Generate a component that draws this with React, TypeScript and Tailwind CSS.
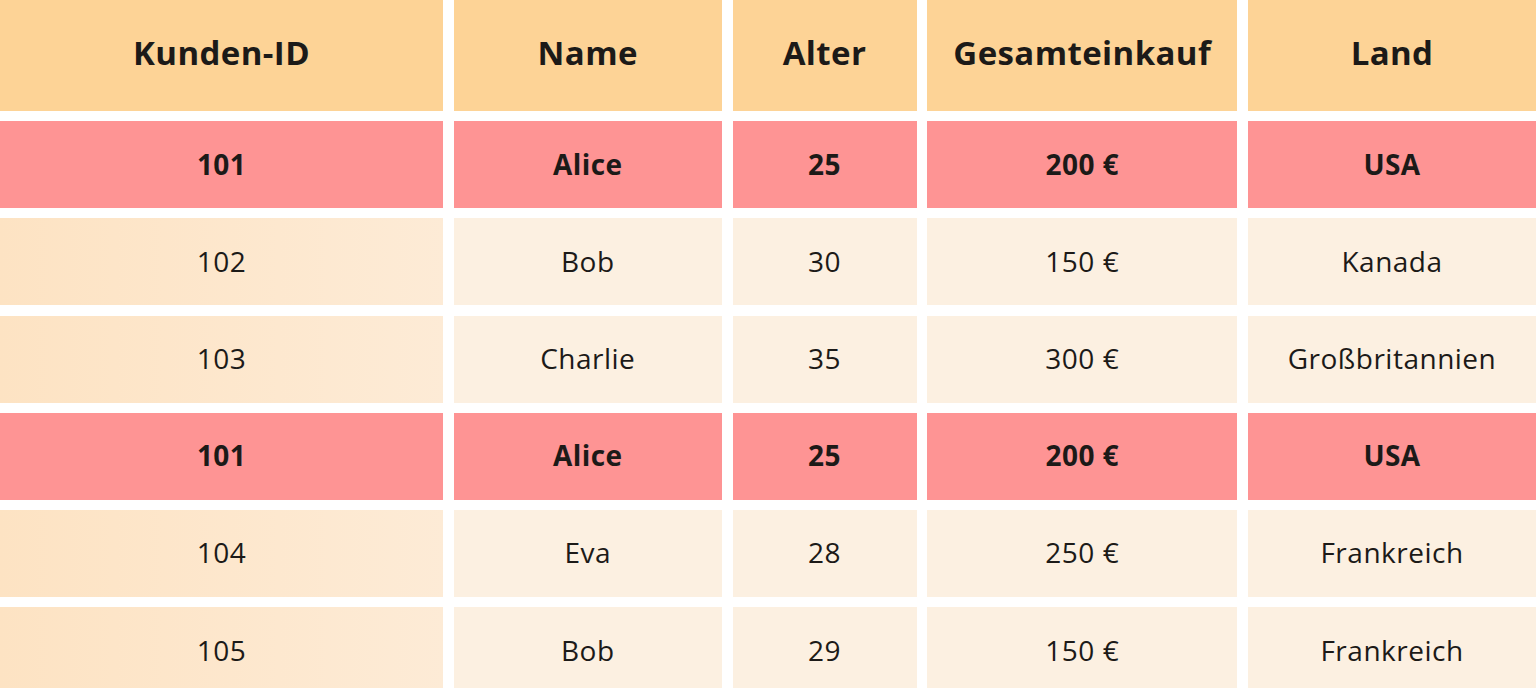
import React from 'react';

const headers = ['Kunden-ID', 'Name', 'Alter', 'Gesamteinkauf', 'Land'];

const rows = [
    { cells: ['101', 'Alice', '25', '200 €', 'USA'], marked: true },
    { cells: ['102', 'Bob', '30', '150 €', 'Kanada'], marked: false },
    { cells: ['103', 'Charlie', '35', '300 €', 'Großbritannien'], marked: false },
    { cells: ['101', 'Alice', '25', '200 €', 'USA'], marked: true },
    { cells: ['104', 'Eva', '28', '250 €', 'Frankreich'], marked: false },
    { cells: ['105', 'Bob', '29', '150 €', 'Frankreich'], marked: false },
];

const App = () => {
    return (
        <div
            className="w-[1536px] h-[688px] overflow-hidden bg-white text-[#1c1a18]"
            style={{ fontFamily: '"Open Sans", "Noto Sans", sans-serif' }}
        >
            <div className="grid grid-cols-[443px_268px_184px_310px_288px] grid-rows-[111px_repeat(6,87px)] gap-x-[10.75px] gap-y-[10.2px]">
                {headers.map((h) => (
                    <div
                        key={h}
                        className="flex items-center justify-center pb-[6px] bg-[#fdd396] text-[33px] font-bold tracking-[0.4px]"
                    >
                        {h}
                    </div>
                ))}
                {rows.map((row, r) =>
                    row.cells.map((c, i) => (
                        <div
                            key={r + '-' + i}
                            className={
                                row.marked
                                    ? 'flex items-center justify-center pb-[2px] bg-[#fe9494] text-[28px] font-bold tracking-[0.4px]'
                                    : i === 0
                                    ? 'flex items-center justify-center pb-[2px] bg-gradient-to-r from-[#fde3c3] to-[#fdebd6] text-[28px] tracking-[0.5px]'
                                    : 'flex items-center justify-center pb-[2px] bg-[#fcf0e1] text-[28px] tracking-[0.5px]'
                            }
                        >
                            {c}
                        </div>
                    ))
                )}
            </div>
        </div>
    );
};

export default App;
